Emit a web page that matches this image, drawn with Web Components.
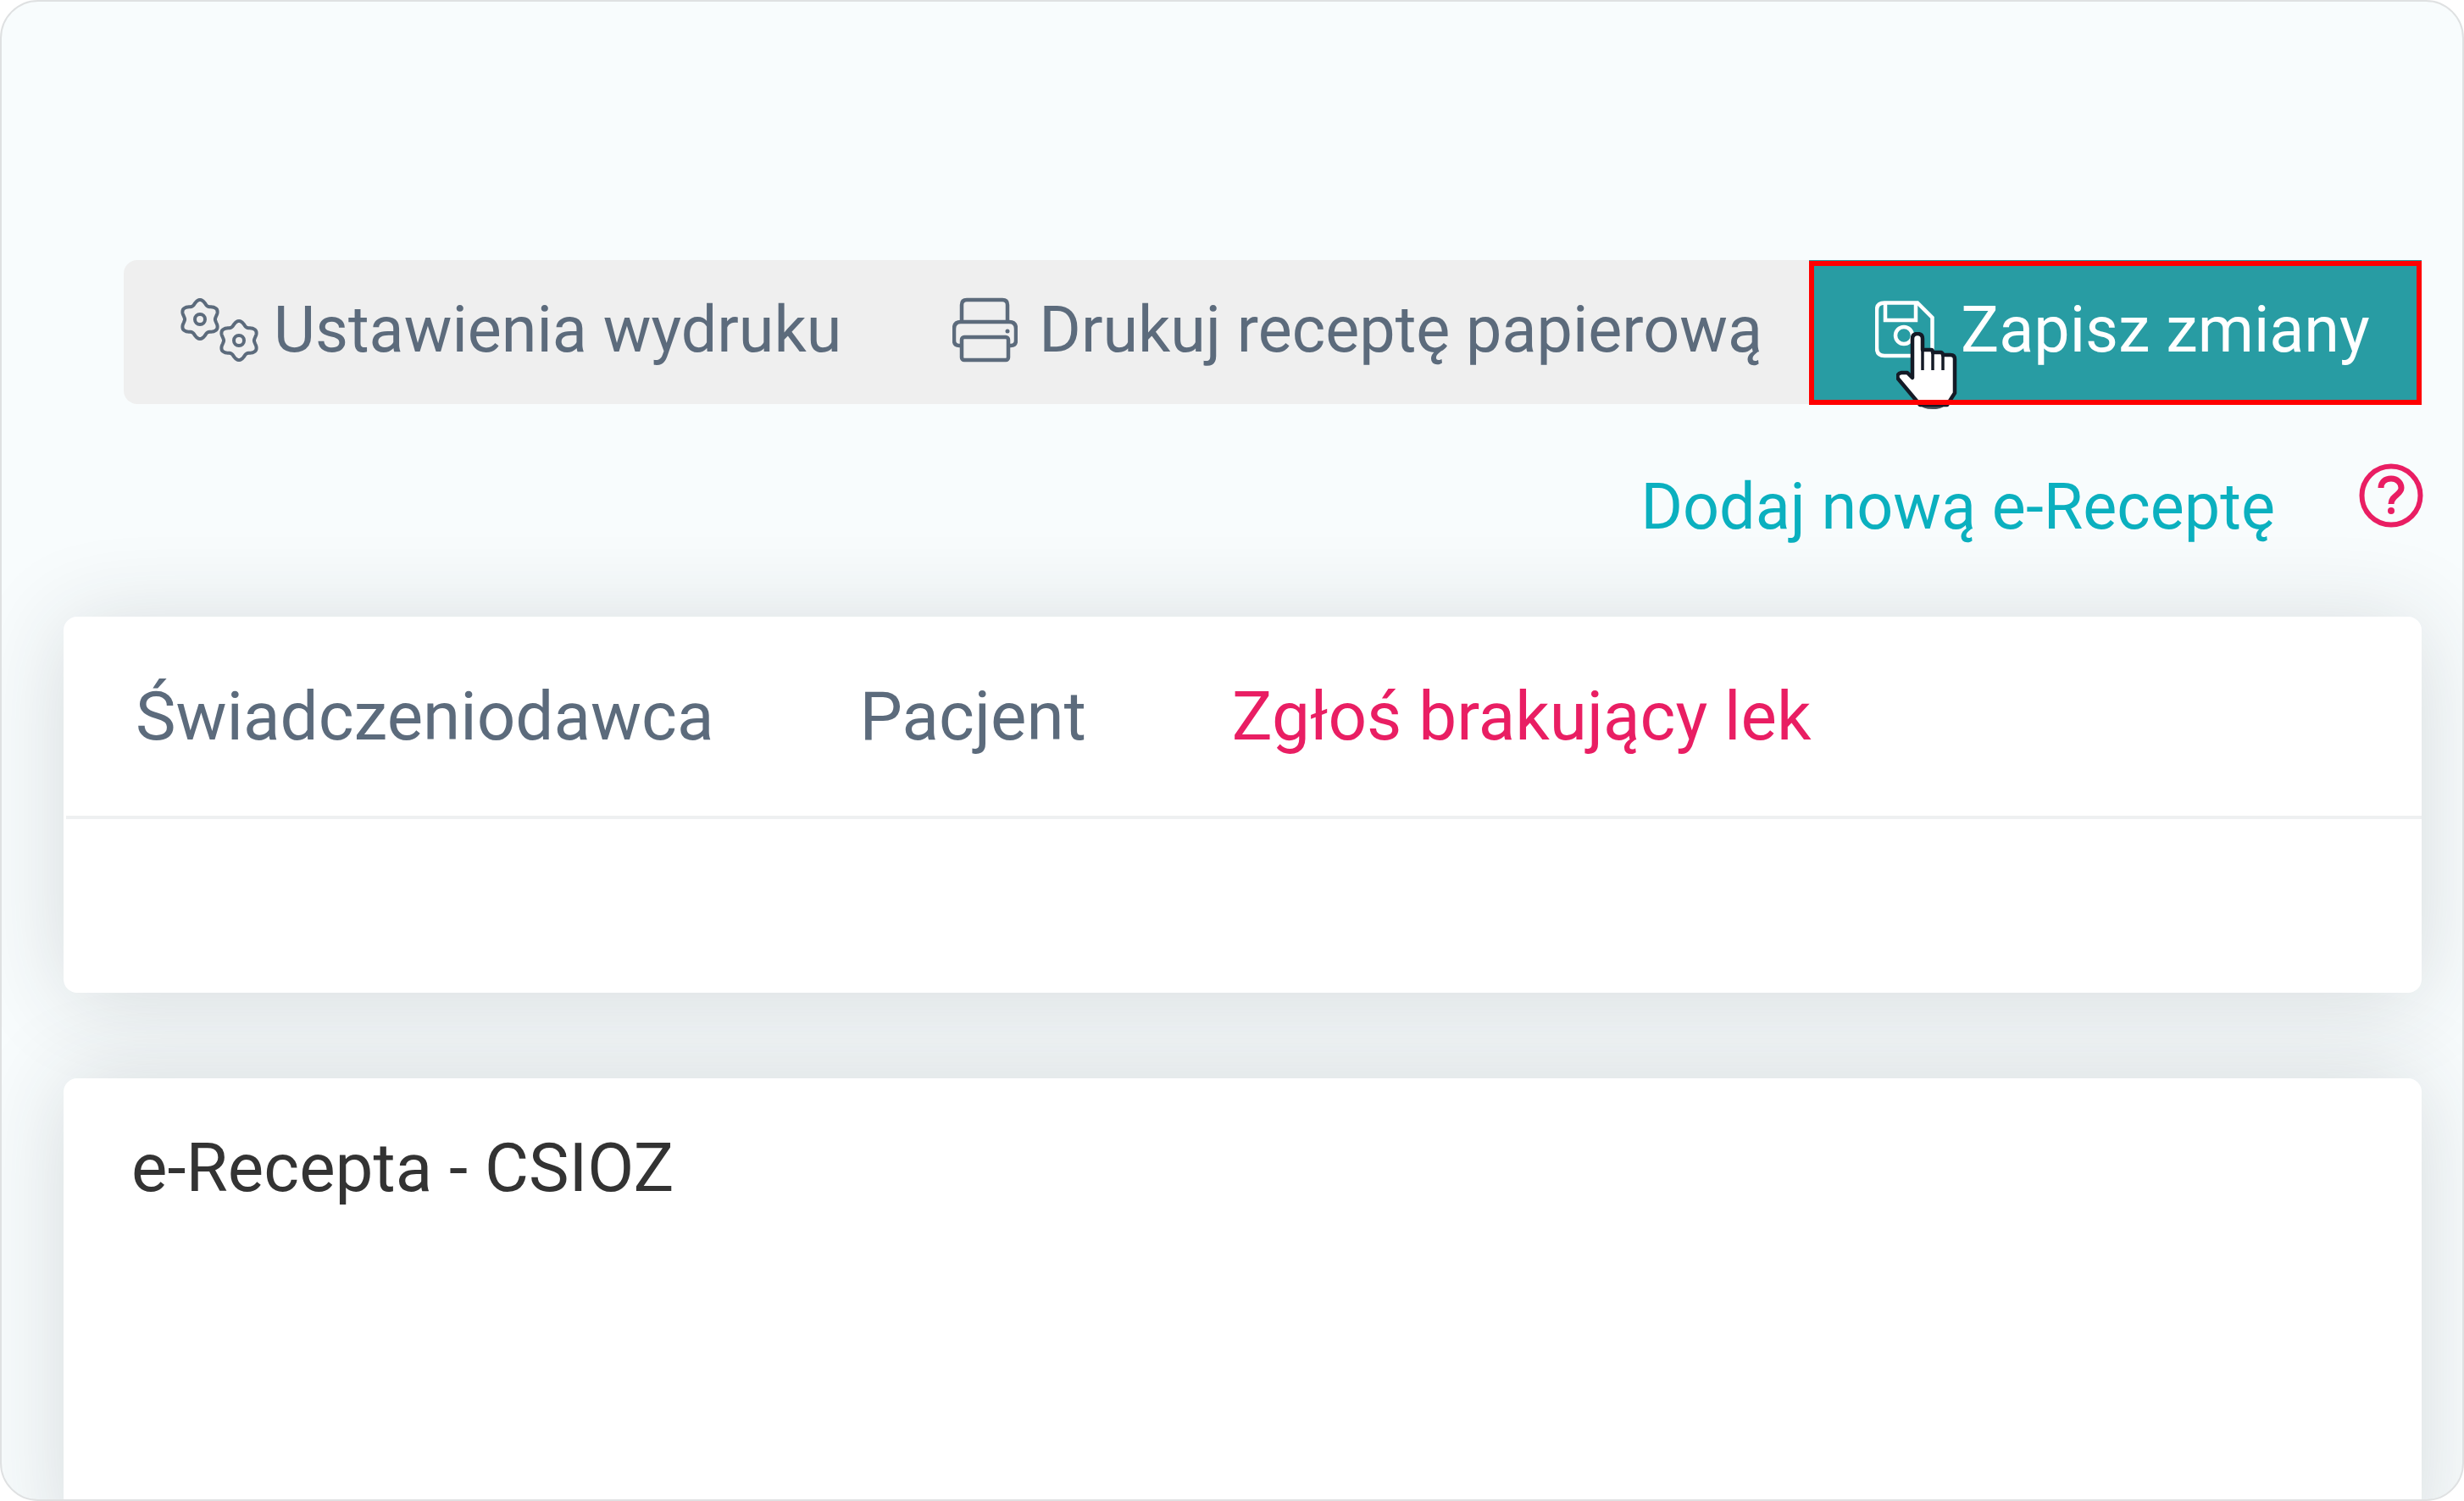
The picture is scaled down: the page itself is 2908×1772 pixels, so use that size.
<!DOCTYPE html>
<html lang="pl">
<head>
<meta charset="utf-8">
<title>e-Recepta</title>
<style>
  html, body { margin: 0; background: #fff; }
  body { font-family: Roboto, "Liberation Sans", sans-serif; }
</style>
</head>
<body>
<rx-page>
  <rx-toolbar>
    <rx-button pad="66 63" gap="15">
      <rx-icon slot="icon" name="gears"></rx-icon>
      Ustawienia wydruku
    </rx-button>
    <rx-button pad="68 55" gap="25">
      <rx-icon slot="icon" name="printer"></rx-icon>
      Drukuj receptę papierową
    </rx-button>
    <rx-button pad="78 50" gap="31" active>
      <rx-icon slot="icon" name="save"></rx-icon>
      Zapisz zmiany
    </rx-button>
  </rx-toolbar>
  <rx-links>Dodaj nową e-Receptę</rx-links>
  <rx-tabs-card>
    <rx-tab>Świadczeniodawca</rx-tab>
    <rx-tab>Pacjent</rx-tab>
    <rx-tab alert>Zgłoś brakujący lek</rx-tab>
  </rx-tabs-card>
  <rx-panel>e-Recepta - CSIOZ</rx-panel>
</rx-page>

<script>
// rounded six tooth gear, drawn as a closed polyline
function gearPath(cx, cy) {
  const pts = [];
  for (let i = 0; i < 96; i++) {
    const a = (i / 96) * Math.PI * 2 - Math.PI / 2;
    const r = 20.5 + 2.6 * Math.cos(6 * (a + Math.PI / 2));
    pts.push((cx + Math.cos(a) * r).toFixed(1) + ' ' + (cy + Math.sin(a) * r).toFixed(1));
  }
  return 'M' + pts.join('L') + 'Z';
}

const ICONS = {
  gears: `<svg width="96" height="75" viewBox="0 0 96 75" fill="none" stroke="#5c6b7c" stroke-width="4">
      <path d="${gearPath(24, 25)}"/><circle cx="24" cy="25" r="6"/>
      <path d="${gearPath(70, 50)}"/><circle cx="70" cy="50" r="6"/>
    </svg>`,
  printer: `<svg width="77" height="77" viewBox="0 0 77 77" fill="none" stroke="#5c6b7c" stroke-width="4.5">
      <path d="M11 28V9q0-6 6-6H59q6 0 6 6V28"/>
      <path d="M11 57H8q-6 0-6-6V37q0-8 8-8H67q8 0 8 8V51q0 6-6 6H66"/>
      <rect x="11" y="47" width="55" height="27" rx="3"/>
      <circle cx="65" cy="40" r="2.5" fill="#5c6b7c" stroke="none"/>
    </svg>`,
  save: `<svg width="70" height="68" viewBox="0 0 70 68" fill="none" stroke="#fff" stroke-width="4.5">
      <path d="M11 2.5H50L67.5 20V56q0 9-9 9H11q-9 0-9-9V11q0-8.500 9-8.500Z"/>
      <path d="M12 3V23H48V3"/>
      <circle cx="34" cy="41" r="10"/>
    </svg>`,
  help: `<svg width="76" height="76" viewBox="0 0 76 76" fill="none" stroke="#e91e63" stroke-width="6">
      <circle cx="38" cy="38" r="34.500"/>
      <path d="M26 29C26 22 31 18 38 18C45 18 50 23 50 29C50 37 38 38 38 48" stroke-width="7"/>
      <circle cx="38" cy="56" r="4" fill="#e91e63" stroke="none"/>
    </svg>`,
  hand: `<svg width="72" height="92" viewBox="0 0 72 92" fill="#fff" stroke="#141a26" stroke-width="4.5" stroke-linejoin="round">
      <path d="M28 85Q30 91 43 91Q56 91 58 85Z" fill="#4a5058" stroke="none"/>
      <path d="M19 54V8Q19 2 25 2Q31 2 31 8V21H41Q43 21 43 24H53Q55 25 55 27H64Q69 27 69 32V72L60 86H28L2 55Q0 49 6 48H13Z"/>
      <path d="M31 21V45M43 24V45M55 27V45" fill="none" stroke-width="3.500"/>
    </svg>`
};

class RxIcon extends HTMLElement {
  connectedCallback() {
    this.attachShadow({ mode: 'open' });
    this.shadowRoot.innerHTML = `
      <style>
        :host { display: block; line-height: 0; }
        svg { display: block; }
      </style>
      ${ICONS[this.getAttribute('name')]}
    `;
  }
}

class RxPage extends HTMLElement {
  connectedCallback() {
    this.attachShadow({ mode: 'open' });
    this.shadowRoot.innerHTML = `
      <style>
        :host {
          display: flex;
          flex-direction: column;
          box-sizing: border-box;
          width: 2908px;
          height: 1772px;
          padding: 305px 48px 0 73px;
          background: #f8fcfd;
          border: 2px solid #dfe1e2;
          border-radius: 45px;
          overflow: hidden;
        }
      </style>
      <slot></slot>
    `;
  }
}

class RxToolbar extends HTMLElement {
  connectedCallback() {
    this.attachShadow({ mode: 'open' });
    this.shadowRoot.innerHTML = `
      <style>
        :host {
          display: flex;
          flex: none;
          margin-left: 71px;
          height: 170px;
          background: #efefef;
          border-radius: 16px 0 0 16px;
        }
      </style>
      <slot></slot>
    `;
  }
}

class RxButton extends HTMLElement {
  connectedCallback() {
    const [left, right] = this.getAttribute('pad').split(' ');
    const active = this.hasAttribute('active');
    this.attachShadow({ mode: 'open' });
    this.shadowRoot.innerHTML = `
      <style>
        :host {
          display: flex;
          align-items: center;
          position: relative;
          box-sizing: border-box;
          gap: ${this.getAttribute('gap')}px;
          padding: 0 ${right}px 6px ${left}px;
          font-size: 75.5px;
          white-space: nowrap;
          color: #5c6b7c;
        }
        :host([active]) {
          flex: 1;
          background: #289ca3;
          color: #fff;
        }
        .cursor { position: absolute; left: 103px; top: 85px; line-height: 0; }
        .frame {
          position: absolute;
          inset: 1px 0 -1px 0;
          border: 6px solid #f00;
        }
      </style>
      <slot name="icon"></slot>
      <span><slot></slot></span>
      ${active ? `<div class="cursor">${ICONS.hand}</div><div class="frame"></div>` : ''}
    `;
  }
}

class RxLinks extends HTMLElement {
  connectedCallback() {
    this.attachShadow({ mode: 'open' });
    this.shadowRoot.innerHTML = `
      <style>
        :host {
          display: flex;
          flex: none;
          justify-content: flex-end;
          align-items: flex-start;
          height: 181px;
          margin: 70px -2px 0 0;
          font-size: 75.5px;
          line-height: 76px;
          color: #0bb0bf;
        }
        span { margin: 13px 99px 0 0; }
        svg { display: block; }
      </style>
      <span><slot></slot></span>
      ${ICONS.help}
    `;
  }
}

class RxTabsCard extends HTMLElement {
  connectedCallback() {
    this.attachShadow({ mode: 'open' });
    this.shadowRoot.innerHTML = `
      <style>
        :host {
          display: block;
          flex: none;
          height: 444px;
          background: #fff;
          border-radius: 16px;
          box-shadow: 0 8px 110px rgba(40, 45, 50, .16);
        }
        .tabs {
          display: flex;
          align-items: center;
          gap: 172px;
          box-sizing: border-box;
          height: 235px;
          padding-left: 85px;
          font-size: 80px;
        }
        hr {
          margin: 0 0 0 3px;
          height: 4px;
          border: 0;
          background: #eef0f1;
        }
      </style>
      <div class="tabs"><slot></slot></div>
      <hr>
    `;
  }
}

class RxTab extends HTMLElement {
  connectedCallback() {
    this.attachShadow({ mode: 'open' });
    this.shadowRoot.innerHTML = `
      <style>
        :host { display: block; color: #5c6b7c; white-space: nowrap; }
        :host([alert]) { color: #e91e63; }
      </style>
      <slot></slot>
    `;
  }
}

class RxPanel extends HTMLElement {
  connectedCallback() {
    this.attachShadow({ mode: 'open' });
    this.shadowRoot.innerHTML = `
      <style>
        :host {
          display: block;
          flex: none;
          height: 560px;
          margin-top: 101px;
          box-sizing: border-box;
          padding: 60px 0 0 80px;
          font-size: 80px;
          line-height: 92px;
          color: #333;
          background: #fff;
          border-radius: 16px 16px 0 0;
          box-shadow: 0 0 110px rgba(40, 45, 50, .16);
        }
      </style>
      <slot></slot>
    `;
  }
}

customElements.define('rx-icon', RxIcon);
customElements.define('rx-page', RxPage);
customElements.define('rx-toolbar', RxToolbar);
customElements.define('rx-button', RxButton);
customElements.define('rx-links', RxLinks);
customElements.define('rx-tabs-card', RxTabsCard);
customElements.define('rx-tab', RxTab);
customElements.define('rx-panel', RxPanel);
</script>
</body>
</html>
